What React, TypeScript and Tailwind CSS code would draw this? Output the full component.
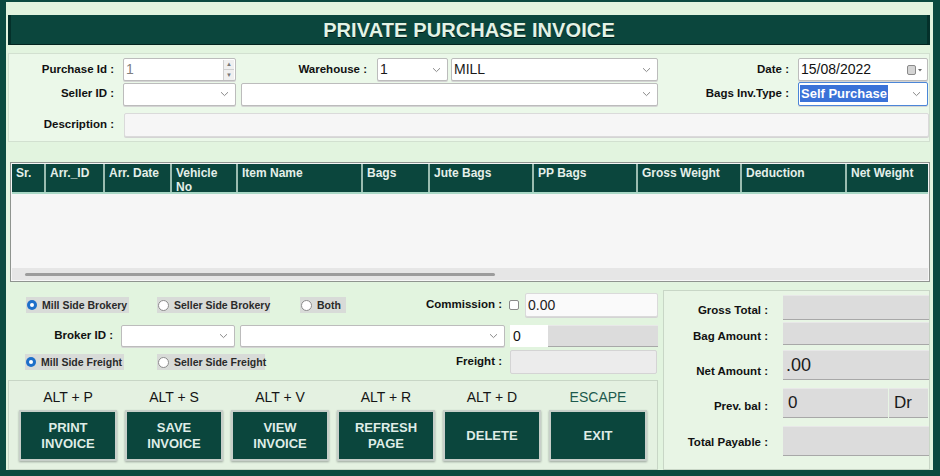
import React from 'react';

const Chevron = () => (
  <svg width="9" height="6" viewBox="0 0 9 6" className="shrink-0">
    <path d="M1 1.2 L4.5 4.6 L8 1.2" fill="none" stroke="#8a8a8a" strokeWidth="1" />
  </svg>
);

function Field({
  w,
  h = 23,
  value,
  select,
  className = '',
  textClass = 'text-[14px] text-[#1a1a1a]',
  children,
}: {
  w: number | string;
  h?: number;
  value?: React.ReactNode;
  select?: boolean;
  className?: string;
  textClass?: string;
  children?: React.ReactNode;
}) {
  return (
    <div
      className={`flex items-center shrink-0 rounded-[2px] border border-[#bcbcbc] bg-white pl-[2px] pr-[6px] shadow-[0_1px_0_#d4d4d4] ${className}`}
      style={{ width: w, height: h }}
    >
      <span className={`flex-1 truncate ${textClass}`}>{value}</span>
      {children}
      {select && <Chevron />}
    </div>
  );
}

function Label({ w, text, className = '' }: { w: number; text: string; className?: string }) {
  return (
    <div
      className={`shrink-0 whitespace-nowrap text-right text-[11.5px] font-bold text-[#111] ${className}`}
      style={{ width: w }}
    >
      {text}
    </div>
  );
}

function Radio({ label, checked, w }: { label: string; checked?: boolean; w: number }) {
  return (
    <div className="flex h-[16px] shrink-0 items-center gap-[5px] bg-[#d8dbd8] pl-[1px]" style={{ width: w }}>
      {checked ? (
        <span className="flex h-[10px] w-[10px] shrink-0 items-center justify-center rounded-full bg-[#1d6fc9]">
          <span className="h-[4px] w-[4px] rounded-full bg-white" />
        </span>
      ) : (
        <span className="h-[11px] w-[11px] shrink-0 rounded-full border border-[#8c8c8c] bg-white" />
      )}
      <span className="whitespace-nowrap text-[10.5px] font-bold leading-none text-[#2a2a2a]">{label}</span>
    </div>
  );
}

const columns: { name: string; w: number }[] = [
  { name: 'Sr.', w: 32 },
  { name: 'Arr._ID', w: 59 },
  { name: 'Arr. Date', w: 67 },
  { name: 'Vehicle No', w: 66 },
  { name: 'Item Name', w: 125 },
  { name: 'Bags', w: 67 },
  { name: 'Jute Bags', w: 104 },
  { name: 'PP Bags', w: 104 },
  { name: 'Gross Weight', w: 104 },
  { name: 'Deduction', w: 105 },
  { name: 'Net Weight', w: 88 },
];

const actions = [
  { key: 'ALT + P', label: ['PRINT', 'INVOICE'] },
  { key: 'ALT + S', label: ['SAVE', 'INVOICE'] },
  { key: 'ALT + V', label: ['VIEW', 'INVOICE'] },
  { key: 'ALT + R', label: ['REFRESH', 'PAGE'] },
  { key: 'ALT + D', label: ['DELETE'] },
  { key: 'ESCAPE', label: ['EXIT'] },
];

function TotalRow({
  label,
  h,
  mt,
  pb = 0,
  children,
}: {
  label: string;
  h: number;
  mt: number;
  pb?: number;
  children: React.ReactNode;
}) {
  return (
    <div className="flex items-end" style={{ marginTop: mt, height: h }}>
      <div style={{ paddingBottom: pb }}>
        <Label w={104} text={label} />
      </div>
      <div className="ml-[15px] flex h-full">{children}</div>
    </div>
  );
}

const grayBox = 'bg-[#dcdcdc] border-b border-[#a8a8a8] border-t border-t-[#e8e8e8]';

export default function App() {
  return (
    <div className="h-[476px] w-[940px] overflow-hidden bg-[#0b4a40] font-['Liberation_Sans',Arial,sans-serif]">
      <div className="ml-[6px] mt-[2px] flex h-[468px] w-[927px] flex-col bg-[#e2f4df] px-[2px]">
        {/* title */}
        <div className="mt-[13px] flex h-[30px] w-[922px] items-center justify-center border-x-[3px] border-x-[#04302a] border-b border-b-[#03241f] bg-[#0b463d]">
          <span className="text-[20px] font-bold tracking-[0.1px] text-[#e3f3e6] [text-shadow:0_1px_0_#021b17]">
            PRIVATE PURCHASE INVOICE
          </span>
        </div>

        {/* header form */}
        <div className="mt-[8px] h-[89px] w-[922px] border border-[#d2e0d0] bg-[#ebf8e9] pt-[4px]">
          <div className="flex items-center">
            <Label w={105} text="Purchase Id :" />
            <Field w={113} value="1" className="ml-[9px] !pr-[1px]" textClass="text-[14px] text-[#808080]">
              <div className="flex h-[20px] w-[11px] flex-col border-l border-[#d0d0d0] bg-[#f0f0f0]">
                <span className="flex flex-1 items-center justify-center border-b border-[#d0d0d0] text-[6px] leading-none text-[#777]">
                  ▲
                </span>
                <span className="flex flex-1 items-center justify-center text-[6px] leading-none text-[#777]">▼</span>
              </div>
            </Field>
            <Label w={126} text="Warehouse :" className="ml-[5px]" />
            <Field w={71} value="1" select className="ml-[10px]" />
            <Field w={207} value="MILL" select className="ml-[3px]" />
            <Label w={131} text="Date :" />
            <Field w={130} value="15/08/2022" className="ml-[9px] !pr-[4px]" textClass="text-[14px] text-[#111]">
              <svg width="16" height="10" viewBox="0 0 16 10">
                <rect x="0.5" y="0.5" width="8" height="9" rx="1.5" fill="#d4d4d4" stroke="#8a8a8a" />
                <path d="M11 4 L15 4 L13 6.5 Z" fill="#6a6a6a" />
              </svg>
            </Field>
          </div>
          <div className="mt-[1px] flex items-center">
            <Label w={105} text="Seller ID :" />
            <Field w={113} select className="ml-[9px]" />
            <Field w={417} select className="ml-[5px]" />
            <Label w={131} text="Bags Inv.Type :" />
            <Field
              w={130}
              h={24}
              select
              className="ml-[9px] !border-[#4b86d8] !pl-[1px]"
              textClass="text-[13px]"
              value={<span className="bg-[#3a72d8] px-[1px] py-[1px] font-bold text-white">Self Purchase</span>}
            />
          </div>
          <div className="mt-[7px] flex items-center">
            <Label w={105} text="Description :" />
            <Field w={805} h={24} className="ml-[10px] !border-[#dadada] !bg-[#f6f6f6]" />
          </div>
        </div>

        {/* grid */}
        <div className="ml-[2px] mt-[20px] flex h-[120px] w-[920px] flex-col border border-[#8f948f] bg-[#f6f6f6] p-[1px]">
          <div className="flex h-[30px] border-b-[2px] border-[#a9d8c6] bg-[#0b463d]">
            {columns.map((c, i) => (
              <div
                key={c.name}
                className={`shrink-0 pl-[4px] pt-[2px] text-[12px] font-bold leading-[14px] text-[#e4efe9] ${
                  i > 0 ? 'border-l-[2px] border-[#9bbcb0]' : ''
                }`}
                style={{ width: c.w }}
              >
                {c.name === 'Vehicle No' ? (
                  <>
                    Vehicle
                    <br />
                    No
                  </>
                ) : (
                  c.name
                )}
              </div>
            ))}
          </div>
          <div className="flex-1" />
          <div className="flex h-[12px] items-center bg-[#e6e6e6]">
            <div className="ml-[13px] h-[3px] w-[470px] rounded-full bg-[#9c9c9c]" />
          </div>
        </div>

        {/* bottom */}
        <div className="mt-[8px] flex gap-[5px]">
          <div className="flex w-[650px] flex-col">
            <div className="mt-[3px] flex h-[24px] items-center">
              <div className="ml-[18px] flex items-center">
                <Radio label="Mill Side Brokery" checked w={103} />
                <div className="ml-[28px]">
                  <Radio label="Seller Side Brokery" w={113} />
                </div>
                <div className="ml-[30px]">
                  <Radio label="Both" w={46} />
                </div>
              </div>
              <Label w={156} text="Commission :" />
              <span className="ml-[7px] h-[10px] w-[10px] rounded-[2px] border border-[#8a8a8a] bg-white" />
              <Field
                w={133}
                h={24}
                value="0.00"
                className="ml-[6px] !border-[#dadada] !bg-[#fafafa]"
                textClass="text-[14px] text-[#222]"
              />
            </div>
            <div className="mt-[8px] flex h-[22px] items-center">
              <Label w={105} text="Broker ID :" />
              <Field w={114} h={22} select className="ml-[8px]" />
              <Field w={265} h={22} select className="ml-[5px]" />
              <div className="ml-[5px] flex h-[22px] w-[148px]">
                <div className="flex w-[38px] items-center bg-white pl-[3px] text-[14px] text-[#111]">0</div>
                <div className={`flex-1 ${grayBox}`} />
              </div>
            </div>
            <div className="mt-[3px] flex h-[24px] items-center">
              <div className="ml-[17px] flex items-center">
                <Radio label="Mill Side Freight" checked w={99} />
                <div className="ml-[33px]">
                  <Radio label="Seller Side Freight" w={108} />
                </div>
              </div>
              <Label w={237} text="Freight :" />
              <div className="ml-[8px] h-[24px] w-[147px] rounded-[2px] border border-[#d4d4d4] bg-[#ececec]" />
            </div>

            {/* buttons */}
            <div className="mt-[6px] h-[90px] w-[650px] border border-[#c8d6c6] bg-[#e4f1e1] pl-[10px] pt-[8px]">
              <div className="flex gap-[8px]">
                {actions.map((a) => (
                  <div key={a.key} className="flex w-[98px] flex-col items-center">
                    <div
                      className={`h-[16px] text-[14px] leading-[16px] ${
                        a.key === 'ESCAPE' ? 'text-[#1c5a4d]' : 'text-[#151515]'
                      }`}
                    >
                      {a.key}
                    </div>
                    <div className="mt-[5px] flex h-[51px] w-[98px] flex-col items-center justify-center border-[2px] border-[#c7cfc9] bg-[#0b463d] shadow-[0_1px_2px_#9aa59c]">
                      {a.label.map((l) => (
                        <span key={l} className="text-[13px] font-bold leading-[16px] text-[#dfece6]">
                          {l}
                        </span>
                      ))}
                    </div>
                  </div>
                ))}
              </div>
            </div>
          </div>

          {/* totals */}
          <div className="h-[180px] w-[267px] border border-[#c8d6c6] bg-[#e8f5e5]">
            <TotalRow label="Gross Total :" h={25} mt={4} pb={1}>
              <div className={`w-[146px] ${grayBox}`} />
            </TotalRow>
            <TotalRow label="Bag Amount :" h={23} mt={2}>
              <div className={`w-[146px] ${grayBox}`} />
            </TotalRow>
            <TotalRow label="Net Amount :" h={30} mt={5}>
              <div className={`flex w-[146px] items-center pl-[3px] text-[18px] text-[#1a1a1a] ${grayBox}`}>.00</div>
            </TotalRow>
            <TotalRow label="Prev. bal :" h={30} mt={8} pb={3}>
              <div className={`flex w-[105px] items-center pl-[5px] text-[17px] text-[#1a1a1a] ${grayBox}`}>0</div>
              <div className={`ml-[1px] flex w-[39px] items-center pl-[5px] text-[17px] text-[#1a1a1a] ${grayBox}`}>
                Dr
              </div>
            </TotalRow>
            <TotalRow label="Total Payable :" h={30} mt={8} pb={5}>
              <div className={`w-[146px] ${grayBox}`} />
            </TotalRow>
          </div>
        </div>
      </div>
    </div>
  );
}
